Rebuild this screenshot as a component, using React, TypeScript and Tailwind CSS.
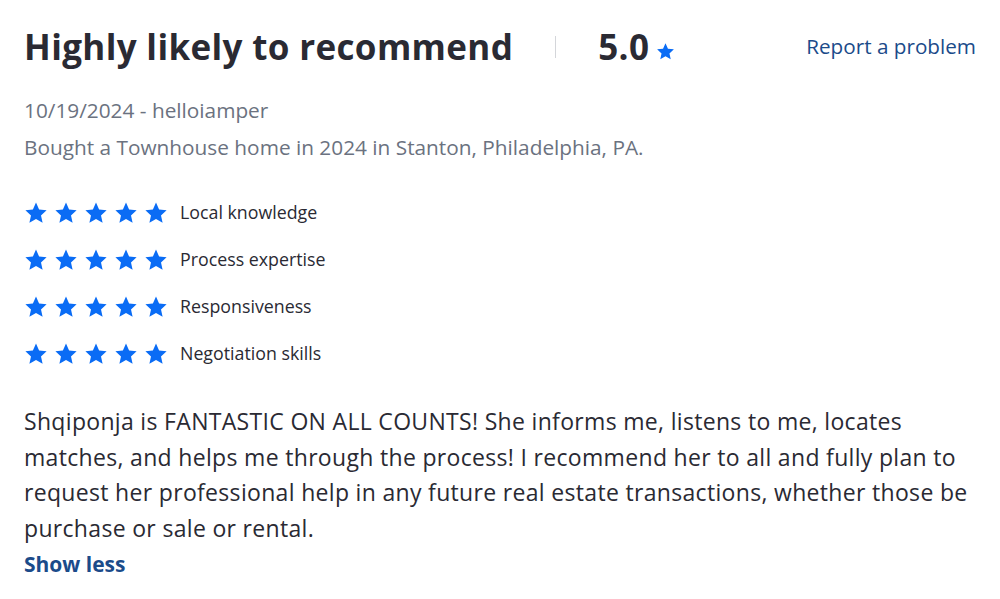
import { ReactNode } from 'react';

const CATEGORIES = ['Local knowledge', 'Process expertise', 'Responsiveness', 'Negotiation skills'];

function Star({ className }: { className?: string }) {
  return (
    <svg viewBox="0 0 24 24" className={className} fill="#0a6cf5">
      <path d="M12 1.6l3.1 6.9 7.5.8-5.6 5.1 1.6 7.4L12 18l-6.6 3.8L7 14.4 1.4 9.3l7.5-.8z" strokeLinejoin="round" />
    </svg>
  );
}

function RatingRow({ label }: { label: ReactNode }) {
  return (
    <div className="flex items-center h-[47px]">
      <div className="flex gap-[6px]">
        {[0, 1, 2, 3, 4].map((i) => (
          <Star key={i} className="w-[24px] h-[24px]" />
        ))}
      </div>
      <span className="ml-[12px] text-[17.8px] text-[#2a2a33]">{label}</span>
    </div>
  );
}

export default function App() {
  return (
    <div
      className="w-[1000px] h-[599px] bg-white px-[24px] pt-[22px]"
      style={{ fontFamily: '"Open Sans", "Noto Sans", sans-serif' }}
    >
      <div className="flex items-center justify-between h-[50px]">
        <div className="flex items-center">
          <h1 className="text-[35px] font-bold text-[#2a2a33] tracking-[0.35px]">Highly likely to recommend</h1>
          <div className="w-px h-[22px] bg-[#d4d6da] ml-[42px] mr-[42px]" />
          <span className="text-[35px] font-bold text-[#2a2a33] tracking-[0.35px]">5.0</span>
          <Star className="w-[19px] h-[19px] ml-[7px] mt-[8px]" />
        </div>
        <a className="text-[20.7px] text-[#1b4b8a]">Report a problem</a>
      </div>

      <div className="mt-[20px] text-[20.8px] text-[#6b7280] leading-[37px]">
        <div>10/19/2024 - helloiamper</div>
        <div>Bought a Townhouse home in 2024 in Stanton, Philadelphia, PA.</div>
      </div>

      <div className="mt-[23px]">
        {CATEGORIES.map((c) => (
          <RatingRow key={c} label={c} />
        ))}
      </div>

      <p className="mt-[27px] text-[23px] leading-[35.5px] text-[#2a2a33] tracking-[0.32px]">
        Shqiponja is FANTASTIC ON ALL COUNTS! She informs me, listens to me, locates matches, and helps me through the process! I recommend her to all and fully plan to request her professional help in any future real estate transactions, whether those be purchase or sale or rental.
      </p>
      <button className="mt-[3px] text-[21px] font-bold text-[#1b4b8a]">Show less</button>
    </div>
  );
}
